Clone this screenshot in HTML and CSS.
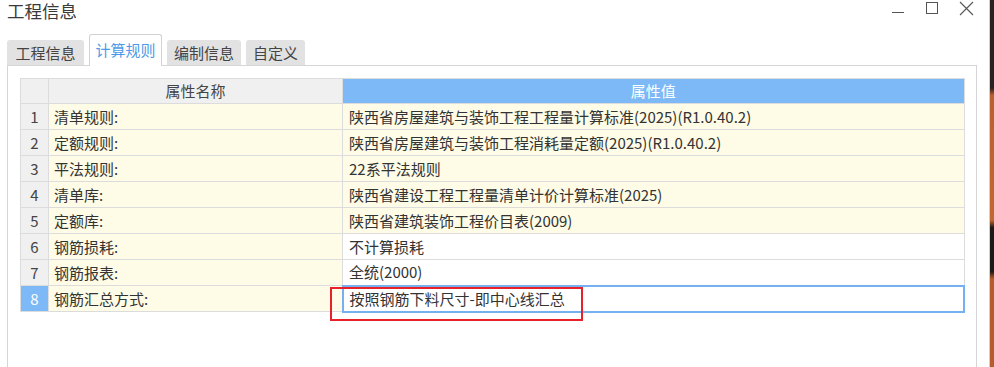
FILE: index.html
```html
<!DOCTYPE html>
<html lang="zh-CN">

<head>
    <meta charset="UTF-8" />
    <meta name="viewport" content="width=device-width, initial-scale=1.0" />
    <title>工程信息</title>
    <link rel="stylesheet" href="styles.css">
</head>

<body>
    <div class="screen">
        <div class="window">
            <div class="title-bar">
                <span class="title">工程信息</span>
                <div class="win-btns">
                    <svg class="win-btn" width="14" height="16" viewBox="0 0 14 16">
                        <line x1="1" y1="12.5" x2="13" y2="12.5" stroke="#555" stroke-width="1" />
                    </svg>
                    <svg class="win-btn" width="14" height="16" viewBox="0 0 14 16">
                        <rect x="1.5" y="2.5" width="11" height="11" fill="none" stroke="#555" stroke-width="1" />
                    </svg>
                    <svg class="win-btn" width="15" height="16" viewBox="0 0 15 16">
                        <path d="M1 2 L14 15 M14 2 L1 15" stroke="#555" stroke-width="1.1" fill="none" />
                    </svg>
                </div>
            </div>

            <div class="tabs">
                <div class="tab t-info">工程信息</div>
                <div class="tab t-calc active">计算规则</div>
                <div class="tab t-edit">编制信息</div>
                <div class="tab t-custom">自定义</div>
            </div>

            <div class="panel">
                <table class="grid">
                    <colgroup>
                        <col class="c-idx" />
                        <col class="c-name" />
                        <col class="c-val" />
                    </colgroup>
                    <thead>
                        <tr>
                            <th class="idx"></th>
                            <th class="h-name">属性名称</th>
                            <th class="h-val">属性值</th>
                        </tr>
                    </thead>
                    <tbody>
                        <tr>
                            <td class="idx">1</td>
                            <td class="name">清单规则:</td>
                            <td class="val fixed">陕西省房屋建筑与装饰工程工程量计算标准(2025)(R1.0.40.2)</td>
                        </tr>
                        <tr>
                            <td class="idx">2</td>
                            <td class="name">定额规则:</td>
                            <td class="val fixed">陕西省房屋建筑与装饰工程消耗量定额(2025)(R1.0.40.2)</td>
                        </tr>
                        <tr>
                            <td class="idx">3</td>
                            <td class="name">平法规则:</td>
                            <td class="val fixed">22系平法规则</td>
                        </tr>
                        <tr>
                            <td class="idx">4</td>
                            <td class="name">清单库:</td>
                            <td class="val fixed">陕西省建设工程工程量清单计价计算标准(2025)</td>
                        </tr>
                        <tr>
                            <td class="idx">5</td>
                            <td class="name">定额库:</td>
                            <td class="val fixed">陕西省建筑装饰工程价目表(2009)</td>
                        </tr>
                        <tr>
                            <td class="idx">6</td>
                            <td class="name">钢筋损耗:</td>
                            <td class="val">不计算损耗</td>
                        </tr>
                        <tr>
                            <td class="idx">7</td>
                            <td class="name">钢筋报表:</td>
                            <td class="val">全统(2000)</td>
                        </tr>
                        <tr class="selected">
                            <td class="idx">8</td>
                            <td class="name">钢筋汇总方式:</td>
                            <td class="val editing">
                                按照钢筋下料尺寸-即中心线汇总
                                <span class="mark"></span>
                            </td>
                        </tr>
                    </tbody>
                </table>
            </div>
        </div>
        <div class="desktop"></div>
    </div>
</body>

</html>
```

FILE: styles.css
```css
*,
::after,
::before {
    box-sizing: border-box;
    padding: 0;
    margin: 0;
}

body {
    width: 994px;
    height: 367px;
    overflow: hidden;
    background-color: #ffffff;
    font-family: "Noto Sans CJK SC", "Noto Sans", sans-serif;
    color: #333;
}

.screen {
    display: flex;
    height: 100%;
}

.window {
    width: 990px;
    height: 100%;
    border-right: 1px solid #cfcfcf;
    display: flex;
    flex-direction: column;
}

.desktop {
    flex: 1;
    background: linear-gradient(180deg, #2a2220 0%, #2a2220 24%, #b9602f 26%, #c2672f 60%, #1e1a18 62%, #1e1a18 74%, #b65c2c 76%, #b65c2c 100%);
}

.title-bar {
    height: 34px;
    display: flex;
    justify-content: space-between;
    align-items: flex-start;
}

.title {
    padding-left: 7px;
    padding-top: 1px;
    font-size: 17.5px;
    line-height: 20px;
    color: #3a3a3a;
}

.win-btns {
    display: flex;
    gap: 20px;
    padding-right: 15px;
}

.win-btn {
    display: block;
}

.tabs {
    display: flex;
    align-items: flex-end;
    gap: 5px;
    height: 31px;
    padding-left: 7px;
    position: relative;
    z-index: 1;
}

.tab {
    height: 25px;
    background-color: #e2e2e2;
    border-radius: 3px 3px 0 0;
    font-size: 15px;
    line-height: 25px;
    text-align: center;
    color: #444;
}

.t-info {
    width: 77px;
}

.t-calc {
    width: 73px;
}

.t-edit {
    width: 74px;
}

.t-custom {
    width: 59px;
}

.tab.active {
    height: 32px;
    margin-bottom: -1px;
    line-height: 30px;
    background-color: #ffffff;
    border: 1px solid #d2d2d2;
    border-bottom: none;
    color: #4d9be8;
}

.panel {
    flex: 1;
    width: 970px;
    margin-left: 7px;
    border: 1px solid #d6d6d6;
    border-bottom: none;
    padding: 12px 0 0 12px;
}

.grid {
    width: 945px;
    border-collapse: collapse;
    table-layout: fixed;
    font-size: 15px;
    border: 1px solid #d3d3d3;
}

.c-idx {
    width: 28px;
}

.c-name {
    width: 294px;
}

.grid th,
.grid td {
    height: 26px;
    border: 1px solid #dcdcdc;
    font-weight: normal;
    white-space: nowrap;
    padding: 0;
    line-height: 22px;
}

.grid th {
    height: 25px;
}

.idx {
    background-color: #f0f0f0;
    text-align: center;
    color: #444;
}

.h-name {
    background-color: #f0f0f0;
    color: #444;
}

.h-val {
    background-color: #7cb9f6;
    color: #ffffff;
}

.name {
    background-color: #fefbe6;
    padding-left: 5px !important;
}

.val {
    background-color: #ffffff;
    padding-left: 6px !important;
}

.val.fixed {
    background-color: #fefbe6;
}

.selected .idx {
    background-color: #7cb9f6;
    color: #ffffff;
}

.val.editing {
    position: relative;
    border: 2px solid #75b0f0;
}

.mark {
    position: absolute;
    left: -14px;
    top: 0;
    width: 253px;
    height: 34px;
    border: 2.5px solid #e8202a;
}
```
